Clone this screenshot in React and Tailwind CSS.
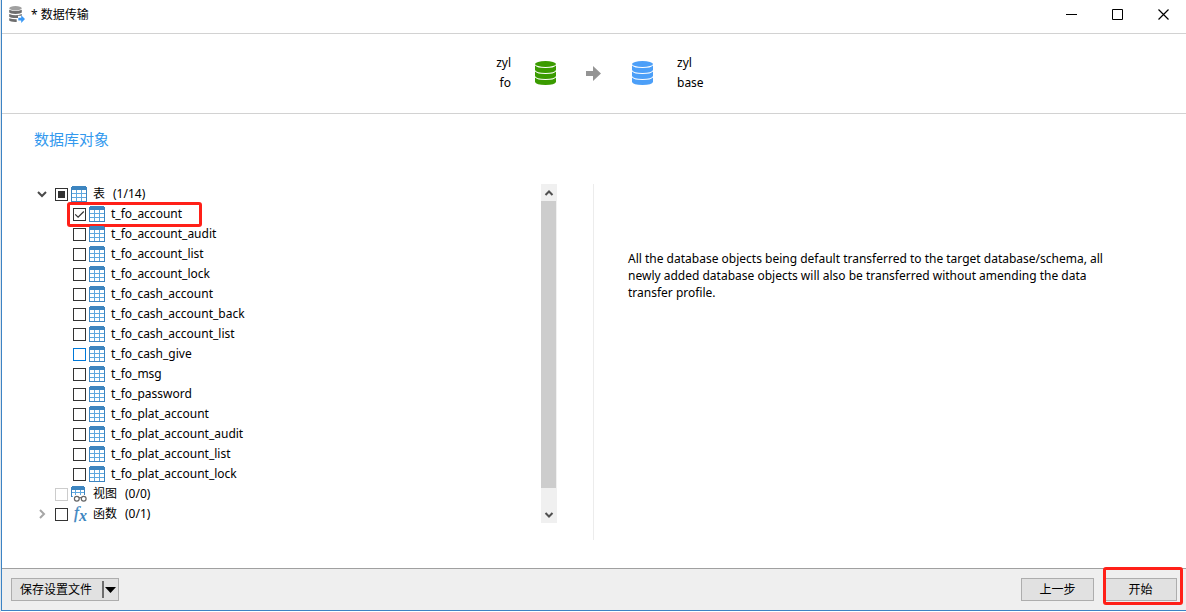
import React, { useState } from 'react';

const TABLES = [
  't_fo_account',
  't_fo_account_audit',
  't_fo_account_list',
  't_fo_account_lock',
  't_fo_cash_account',
  't_fo_cash_account_back',
  't_fo_cash_account_list',
  't_fo_cash_give',
  't_fo_msg',
  't_fo_password',
  't_fo_plat_account',
  't_fo_plat_account_audit',
  't_fo_plat_account_list',
  't_fo_plat_account_lock',
];

const TitleIcon = () => (
  <svg width="16" height="17" viewBox="0 0 16 17" aria-hidden="true">
    <ellipse cx="6.5" cy="2.2" rx="6.300" ry="2.2" fill="#a0a0a0" />
    <g fill="#6e6e6e">
      <path d="M.2 3.800q6.300 2.600 12.600 0v2.700q-1 1.400-6.300 1.400T.2 6.500z" />
      <path d="M.2 8q6.300 2.600 12.600 0v1.700H9v2.200q-7.500.2-8.800-1.200z" />
      <path d="M.2 12.200q3 1.200 7.500 1.100v2.700q-6.500.2-7.500-1.400z" />
    </g>
    <path d="M9.300 11.800h2.900V9.200l3.800 3.900-3.800 3.900v-2.600H9.300z" fill="#3b99f5" />
  </svg>
);

const DatabaseIcon = ({ color }) => (
  <svg width="21" height="24" viewBox="0 0 21 24" fill={color} aria-hidden="true">
    <ellipse cx="10.5" cy="3" rx="10.5" ry="3" />
    <path d="M0 4.500q2 2.500 10.500 2.500T21 4.500V9q-1 3-10.500 3T0 9z" />
    <path d="M0 10.500q2 2.500 10.500 2.500T21 10.500V15q-1 3-10.500 3T0 15z" />
    <path d="M0 16.500q2 2.500 10.500 2.500T21 16.500V21q-1 3-10.500 3T0 21z" />
  </svg>
);

const TableIcon = () => (
  <svg width="16" height="16" viewBox="0 0 16 16" shapeRendering="crispEdges" aria-hidden="true">
    <path d="M0 1h1V0h14v1h1v15H0z" fill="#3d85c0" />
    <path d="M1 4h14v11H1z" fill="#5fa8e0" />
    <path
      d="M1 4h4v3H1zM6 4h4v3H6zM11 4h4v3h-4zM1 8h4v3H1zM6 8h4v3H6zM11 8h4v3h-4zM1 12h4v3H1zM6 12h4v3H6zM11 12h4v3h-4z"
      fill="#fff"
    />
  </svg>
);

const ViewIcon = () => (
  <svg width="16" height="16" viewBox="0 0 16 16" aria-hidden="true">
    <g shapeRendering="crispEdges">
      <path d="M0 1h1V0h12v1h1v10H0z" fill="#3d85c0" />
      <path d="M1 4h12v7H1z" fill="#5fa8e0" />
      <path d="M1 4h3v2H1zM5 4h4v2H5zM10 4h3v2h-3zM1 7h3v3H1zM5 7h4v3H5zM10 7h3v3h-3z" fill="#fff" />
      <path d="M2 9h14v6H2z" fill="#fff" />
    </g>
    <g fill="#fff" stroke="#666" strokeWidth="1.200">
      <circle cx="5.800" cy="12.700" r="2.400" />
      <circle cx="12.700" cy="12.700" r="2.400" />
      <path d="M8 12q1.200-1 2.400 0" fill="none" />
    </g>
  </svg>
);

const FunctionIcon = () => (
  <svg width="16" height="16" viewBox="0 0 16 16" aria-hidden="true" className="overflow-visible">
    <g
      fill="#3d85c0"
      stroke="#3d85c0"
      strokeWidth="0.300"
      fontStyle="italic"
      style={{ fontFamily: '"Liberation Serif", serif' }}
    >
      <text x="3" y="12" fontSize="17">
        f
      </text>
      <text x="8" y="15" fontSize="16" fontWeight="bold" stroke="none">
        x
      </text>
    </g>
  </svg>
);

const Chevron = ({ open }) => (
  <svg width="10" height="10" viewBox="0 0 10 10" fill="none" strokeWidth="2" aria-hidden="true">
    {open ? (
      <path d="M1 3l4 4 4-4" stroke="#4a4a4a" />
    ) : (
      <path d="M3 1l4 4-4 4" stroke="#a6a6a6" />
    )}
  </svg>
);

const Checkbox = ({ id, checked, partial, focused, disabled, onChange }) => {
  let border = 'border-[#333333]';
  if (focused) border = 'border-[#0078d7]';
  if (disabled) border = 'border-[#cccccc]';
  return (
    <span className="relative block size-[13px]">
      <input
        id={id}
        type="checkbox"
        checked={checked}
        disabled={disabled}
        onChange={onChange}
        className={`block size-[13px] appearance-none border bg-white ${border}`}
      />
      {partial && <span className="pointer-events-none absolute inset-[3px] bg-[#333333]" />}
      {checked && !partial && (
        <svg
          width="13"
          height="13"
          viewBox="0 0 13 13"
          fill="none"
          className="pointer-events-none absolute inset-0"
        >
          <path d="M2.200 6.300l2.900 2.900 5.700-5.700" stroke="#333" strokeWidth="1.200" />
        </svg>
      )}
    </span>
  );
};

const GroupRow = ({ id, name, count, icon, expander, ...box }) => (
  <li className="flex h-5 items-center">
    <span className="mr-2 flex w-[13px] items-center pl-[3px]">{expander}</span>
    <Checkbox id={id} {...box} />
    <label htmlFor={id} className="ml-[3px] flex items-center whitespace-pre">
      {icon}
      <span className="ml-[6px]">{name}</span>
      <span className="ml-2">{count}</span>
    </label>
  </li>
);

const ScrollArrow = ({ up }) => (
  <svg width="16" height="17" viewBox="0 0 16 17" fill="none" stroke="#505050" strokeWidth="2">
    <path d={up ? 'M4.500 11L8 7.500 11.500 11' : 'M4.500 7L8 10.500 11.500 7'} />
  </svg>
);

const App = () => {
  const [selected, setSelected] = useState(['t_fo_account']);
  const [allFunctions, setAllFunctions] = useState(false);

  const toggle = (name) => {
    setSelected((prev) =>
      prev.includes(name) ? prev.filter((item) => item !== name) : [...prev, name]
    );
  };

  const toggleAll = () => {
    setSelected((prev) => (prev.length === TABLES.length ? [] : TABLES));
  };

  return (
    <div className="flex min-h-screen flex-col border-l border-[#dfe6ec] bg-white pb-px font-['Noto_Sans','Noto_Sans_CJK_SC',sans-serif] text-[12px] text-black">
      <div className="flex flex-1 flex-col border-b border-l border-[#3c83c4]">
        <header className="flex h-[34px] items-start border-b border-[#d2d2d2]">
          <div className="flex h-[29px] flex-1 items-center gap-[6px] pl-[7px]">
            <TitleIcon />
            <h1 className="leading-5">* 数据传输</h1>
          </div>
          <button type="button" aria-label="Minimize" className="grid h-7 w-[46px] place-items-center">
            <svg width="11" height="11" stroke="#000">
              <path d="M0 5.500h11" />
            </svg>
          </button>
          <button type="button" aria-label="Maximize" className="grid h-7 w-[46px] place-items-center">
            <svg width="11" height="11" stroke="#000" fill="none">
              <path d="M.5.5h10v10H.5z" />
            </svg>
          </button>
          <button type="button" aria-label="Close" className="grid h-7 w-[46px] place-items-center">
            <svg width="11" height="11" stroke="#000" strokeWidth="1.200">
              <path d="M.5.5l10 10M10.500.5l-10 10" />
            </svg>
          </button>
        </header>

        <section className="grid h-20 grid-cols-[1fr_auto_1fr] items-center border-b border-[#d2d2d2] pb-px leading-5">
          <div className="text-right">
            <p>zyl</p>
            <p>fo</p>
          </div>
          <div className="flex items-center px-6">
            <DatabaseIcon color="#3a9b00" />
            <svg width="16" height="15" viewBox="0 0 16 15" className="mx-[30px]" fill="#949494">
              <path d="M0 5h7V0l8 7.500L7 15v-5H0z" />
            </svg>
            <DatabaseIcon color="#4c9ff8" />
          </div>
          <div>
            <p>zyl</p>
            <p>base</p>
          </div>
        </section>

        <main className="flex flex-1 flex-col pt-[15px] pb-7">
          <h2 className="pl-8 text-[15px] leading-5 text-[#3399ee]">数据库对象</h2>
          <div className="mt-[35px] grid flex-1 grid-cols-2">
            <div className="flex items-start border-r border-[#ececec] pr-9 pl-8">
              <ul className="flex-1">
                <GroupRow
                  id="tables"
                  name="表"
                  count={`(${selected.length}/${TABLES.length})`}
                  icon={<TableIcon />}
                  expander={<Chevron open />}
                  checked={selected.length === TABLES.length}
                  partial={selected.length > 0 && selected.length < TABLES.length}
                  onChange={toggleAll}
                />
                {TABLES.map((name, index) => (
                  <li key={name} className="relative flex h-5 items-center pl-[39px]">
                    <Checkbox
                      id={name}
                      checked={selected.includes(name)}
                      focused={name === 't_fo_cash_give'}
                      onChange={() => toggle(name)}
                    />
                    <label htmlFor={name} className="ml-[3px] flex items-center gap-[6px]">
                      <TableIcon />
                      {name}
                    </label>
                    {index === 0 && (
                      <span className="pointer-events-none absolute -top-[2px] left-[33px] h-[25px] w-[135px] rounded-[3px] border-[3px] border-[#ff2018]" />
                    )}
                  </li>
                ))}
                <GroupRow id="views" name="视图" count="(0/0)" icon={<ViewIcon />} checked={false} disabled />
                <GroupRow
                  id="functions"
                  name="函数"
                  count={allFunctions ? '(1/1)' : '(0/1)'}
                  icon={<FunctionIcon />}
                  expander={<Chevron />}
                  checked={allFunctions}
                  onChange={() => setAllFunctions((prev) => !prev)}
                />
              </ul>
              <div className="mb-[17px] flex w-4 flex-col self-stretch bg-[#f0f0f0]">
                <ScrollArrow up />
                <div className="mr-px flex-1 bg-[#cdcdcd]" />
                <div className="h-[18px]" />
                <ScrollArrow />
              </div>
            </div>
            <div className="pt-[66px] pr-16 pl-[34px]">
              <p className="leading-[17px]">
                All the database objects being default transferred to the target database/schema, all
                newly added database objects will also be transferred without amending the data
                transfer profile.
              </p>
            </div>
          </div>
        </main>

        <footer className="flex items-center border-t border-[#a0a0a0] bg-[#efefef] p-[9px]">
          <button
            type="button"
            className="flex h-[23px] items-center border border-[#adadad] bg-[#e1e1e1] pl-2"
          >
            保存设置文件
            <span className="mr-px ml-[10px] h-[17px] w-[2px] bg-[#6d6d6d]" />
            <svg width="11" height="6" viewBox="0 0 11 6" className="mr-[2px]">
              <path d="M0 0h11L5.500 6z" />
            </svg>
          </button>
          <div className="ml-auto flex gap-[10px]">
            <button type="button" className="h-[23px] w-[73px] border border-[#adadad] bg-[#e1e1e1]">
              上一步
            </button>
            <div className="relative">
              <button type="button" className="h-[23px] w-[73px] border border-[#adadad] bg-[#e1e1e1]">
                开始
              </button>
              <span className="pointer-events-none absolute -top-[11px] -right-[6px] h-[38px] w-20 rounded-[3px] border-[3px] border-[#ff2018]" />
            </div>
          </div>
        </footer>
      </div>
    </div>
  );
};

export default App;
